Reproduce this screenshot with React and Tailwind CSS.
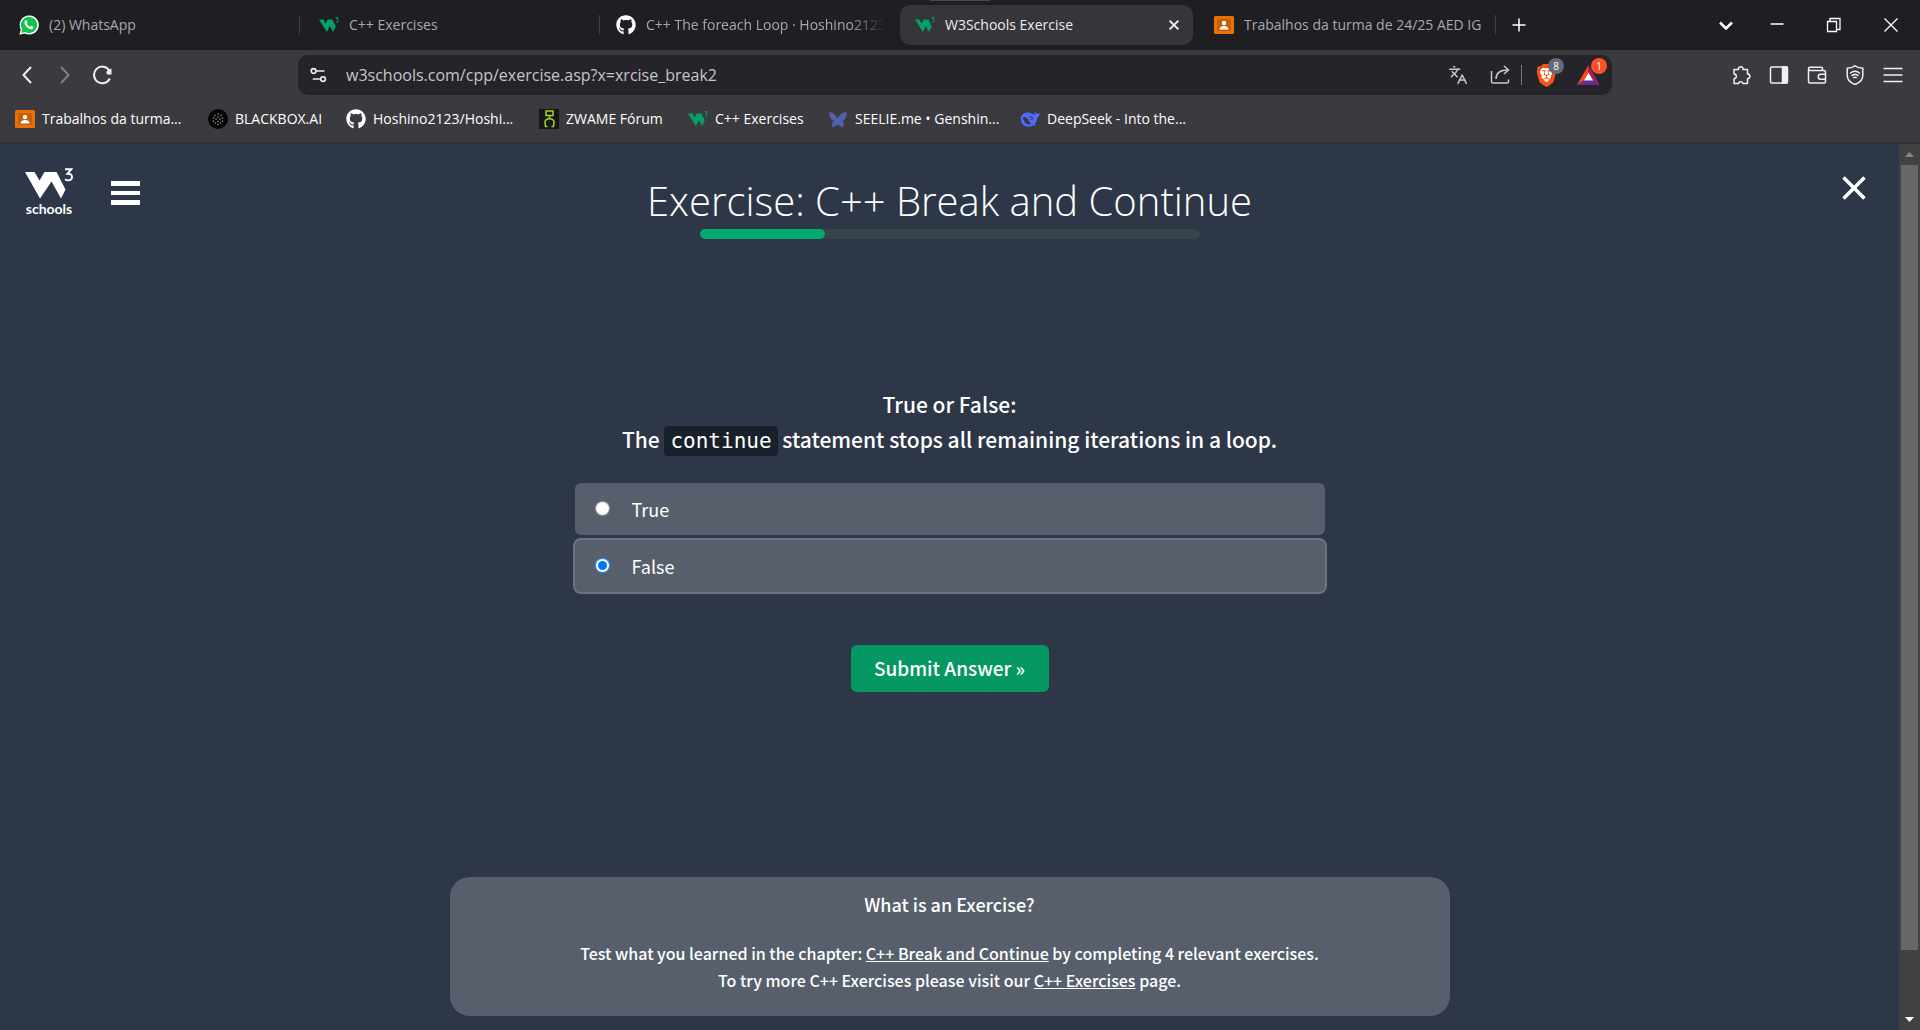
import React, { useState } from "react";
import { FaGithub } from "react-icons/fa";
import { SiBrave } from "react-icons/si";
import { Languages } from "lucide-react";

function W3Icon() {
  return (
    <svg viewBox="0 0 20 20" className="size-5 shrink-0" aria-hidden="true">
      <path d="M0 4.5h4.6l2 4 2-4h4.8l3.3 7-2.6 5.5-3.2-6-3 6Z" fill="#04a06a" />
      <path d="M16.6 2.6h2.6l-1.5 1.9c1.1 0 1.7.6 1.7 1.4 0 .9-1 1.6-2.6 1.2" fill="none" stroke="#04a06a" strokeWidth="1" />
    </svg>
  );
}

function WhatsAppIcon() {
  return (
    <svg viewBox="0 0 20 20" className="size-5 shrink-0" aria-hidden="true">
      <path d="M.4 19.8 1.8 14.6A9.6 9.6 0 1 1 5.6 18.4Z" fill="#fff" />
      <path d="m2.2 18 1-3.7A8.1 8.1 0 1 1 6 17Z" fill="#12c24c" />
      <path d="M7 5.2c.4 0 .6 0 .8.5l.7 1.6c.1.4-.7 1.1-.7 1.4.8 1.5 1.9 2.5 3.4 3.1.3.1.9-1 1.2-1l1.900.9c.5.3 0 1.8-.7 2.2-1.5.9-3.6 0-5.3-1.4C6.600 11 5.400 9.200 5.500 7.500c0-1 .7-2.300 1.500-2.300Z" fill="#fff" />
    </svg>
  );
}

function ClassroomIcon() {
  return (
    <svg viewBox="0 0 20 20" className="size-5 shrink-0" aria-hidden="true">
      <rect y="1" width="20" height="18" rx="1.5" fill="#e8710a" />
      <rect x="3" y="4" width="14" height="12" fill="#c65f08" />
      <circle cx="10" cy="8" r="2.2" fill="#fff" />
      <path d="M5.500 14.500c0-2.500 2.500-3.500 4.500-3.500s4.500 1 4.500 3.500Z" fill="#fff" />
    </svg>
  );
}

function BlackboxIcon() {
  const dots = [
    [10, 5], [7, 6.5], [13, 6.5], [10, 8], [5.5, 9], [14.5, 9], [8, 10], [12, 10],
    [5.5, 12], [14.5, 12], [10, 12.5], [7.5, 14], [12.5, 14], [10, 15.5],
  ];
  return (
    <svg viewBox="0 0 20 20" className="size-5 shrink-0" aria-hidden="true">
      <circle cx="10" cy="10" r="10" fill="#050505" />
      {dots.map(([x, y]) => (
        <circle key={`${x}-${y}`} cx={x} cy={y} r=".8" fill="#999" />
      ))}
    </svg>
  );
}

function ZwameIcon() {
  return (
    <svg viewBox="0 0 20 20" className="size-5 shrink-0" aria-hidden="true">
      <rect width="20" height="20" fill="#161616" />
      <g fill="none" stroke="#a4d420" strokeWidth="1.5">
        <path d="M7 2h7v4.500H7ZM10.500 6.500V9" />
        <path d="M8.500 17.500H6.500l-.5-4c0-5 9-5 9 0l-.5 4h-2" />
      </g>
    </svg>
  );
}

function SeelieIcon() {
  return (
    <svg viewBox="0 0 20 20" className="size-5 shrink-0" aria-hidden="true">
      <path d="M1 3c4 0 7 3 8.500 7C11 6 14 3 18.500 3c.5 4-1 8-4 9 2 2 2 4 .5 6-2 0-4-1-5.200-3.500C8.500 17 7 18 4.500 18 3.500 16 4 14 5.500 12 2.500 10.500 1 7 1 3Z" fill="#5560a8" />
      <path d="m9.700 10 2.200 3-2.200 4-2-4Z" fill="#3f62e0" />
    </svg>
  );
}

function DeepSeekIcon() {
  return (
    <svg viewBox="0 0 20 20" className="size-5 shrink-0" aria-hidden="true">
      <path d="M19.600 4.300c-.9.600-1.600.400-2.600.200-1-.3-1.500-1.200-2.400-1.800.1 1 .1 2 .9 2.900-.7.500-1.300.5-2 0-1-.8-2-1.400-3.500-1.600-.5-.1-1.300-.2-1.500-.8-2.400.5-4.200.4-6 2.300C.6 7.500.2 11 1.600 13.700c1.600 3 4.900 4.400 8 3.900 1.300-.2 2.300-.7 3.200-1.400.9.400 1.900.4 2.600 0 .5-.4 0-.8-.8-1.200 1.900-2.200 2.600-4.600 2.700-6.600 1.500-.4 2.500-1.800 2.300-4.100Z" fill="#4d6bfe" />
      <path d="M3 8.300c2-.7 3.600.3 4.800 2 1.200 1.700 1.900 3.500 3.600 4.600-3.400 1.300-5.700-.2-7.100-2.500C3.500 11.100 3 9.800 3 8.300Z" fill="#3b3b3f" />
      <path d="M9.600 8c1.600-.6 3 .8 3.400 2.300M10.500 10.200l.8.800" stroke="#3b3b3f" strokeWidth="1.2" fill="none" />
    </svg>
  );
}

function GithubIcon() {
  return <FaGithub className="size-5 shrink-0 text-white" aria-hidden="true" />;
}

const TABS = [
  { icon: WhatsAppIcon, label: "(2) WhatsApp" },
  { icon: W3Icon, label: "C++ Exercises" },
  { icon: GithubIcon, label: "C++ The foreach Loop · Hoshino2123" },
  { icon: W3Icon, label: "W3Schools Exercise", active: true },
  { icon: ClassroomIcon, label: "Trabalhos da turma de 24/25 AED IG" },
];

const BOOKMARKS = [
  { icon: ClassroomIcon, label: "Trabalhos da turma...", width: "w-[193px]" },
  { icon: BlackboxIcon, label: "BLACKBOX.AI", width: "w-[138px]" },
  { icon: GithubIcon, label: "Hoshino2123/Hoshi...", width: "w-[193px]" },
  { icon: ZwameIcon, label: "ZWAME Fórum", width: "w-[149px]" },
  { icon: W3Icon, label: "C++ Exercises", width: "w-[140px]" },
  { icon: SeelieIcon, label: "SEELIE.me • Genshin...", width: "w-[192px]" },
  { icon: DeepSeekIcon, label: "DeepSeek - Into the...", width: "w-[192px]" },
];

function Line({ children, className = "size-5", width = 1.5, label }) {
  return (
    <button type="button" aria-label={label} className="flex shrink-0 items-center justify-center">
      <svg viewBox="0 0 20 20" className={className} fill="none" stroke="currentColor" strokeWidth={width}>
        {children}
      </svg>
    </button>
  );
}

function TabStrip() {
  return (
    <div className="relative flex h-[50px] items-center bg-[#1f1e23] text-[#a9a9ad]">
      <div className="absolute top-0 left-1/2 h-px w-[60px] -translate-x-1/2 bg-[#4a4a4a]" />
      <div className="flex h-10 min-w-0 items-center" role="tablist">
        {TABS.map(({ icon: Icon, label, active }, i) => (
          <div
            key={i}
            className={
              active
                ? "flex h-10 w-[293px] min-w-0 items-center rounded-[10px] bg-[#36353a] pr-[11px] pl-[15px] text-[#ececee]"
                : i < 2
                  ? "flex h-5 w-[300px] min-w-0 items-center border-r border-[#3f3e44] pr-3 pl-[19px]"
                  : i === 2
                    ? "flex h-5 w-[300px] min-w-0 items-center pr-[15px] pl-[16px]"
                    : "flex h-5 w-[303px] min-w-0 items-center border-r border-[#3f3e44] pr-[10px] pl-[21px]"
            }
          >
            <button type="button" role="tab" aria-selected={!!active} className="flex min-w-0 flex-1 items-center gap-[10px]">
              <Icon />
              <span
                className={
                  i === 2
                    ? "overflow-hidden font-['Open_Sans'] text-sm whitespace-nowrap [mask-image:linear-gradient(90deg,#000_85%,transparent)]"
                    : "overflow-hidden font-['Open_Sans'] text-sm whitespace-nowrap"
                }
              >
                {label}
              </span>
            </button>
            {active && (
              <Line label="Close tab" className="size-4" width={2.5}>
                <path d="m4.500 4.500 11 11m0-11-11 11" />
              </Line>
            )}
          </div>
        ))}
      </div>
      <div className="flex flex-1 items-center justify-between pr-[19px] pl-[13px] text-white">
        <Line label="New tab">
          <path d="M3.500 10h13M10 3.500v13" />
        </Line>
        <div className="flex items-center gap-[31px]">
          <Line label="Search tabs" width={2.5}>
            <path d="m4 7.500 6 6 6-6" />
          </Line>
          <div className="flex items-center gap-[37px]">
            <Line label="Minimize">
              <path d="M3.500 9h13" />
            </Line>
            <Line label="Restore" width={1.3}>
              <path d="M3.500 6.500h9v10h-9ZM6 6.500v-3h10v11h-3.500" />
            </Line>
            <Line label="Close window" width={1.3}>
              <path d="m3.500 3.500 13 13m0-13-13 13" />
            </Line>
          </div>
        </div>
      </div>
    </div>
  );
}

function Toolbar() {
  return (
    <div className="flex h-[50px] items-center text-[#f0f0f2]">
      <div className="flex w-[298px] shrink-0 items-center gap-[18px] pl-[17px]">
        <Line label="Back" width={2}>
          <path d="m14 2-7.500 8 7.500 8" />
        </Line>
        <span className="text-[#808085]">
          <Line label="Forward" width={2}>
            <path d="m6 2 7.500 8L6 18" />
          </Line>
        </span>
        <Line label="Reload" width={2}>
          <path d="M16 5a8.300 8.300 0 1 0 .8 8.500" />
          <path d="M18.500 3.500v6h-4.500a3 3 0 0 1 1-4.500Z" fill="currentColor" stroke="none" />
        </Line>
      </div>
      <div className="flex h-10 w-[1314px] min-w-0 items-center rounded-[10px] bg-[#25242a] pr-3 pl-3">
        <Line label="Site settings" className="size-[18px]" width={1.8}>
          <circle cx="4" cy="5.500" r="2.600" />
          <path d="M7 5.500h9M3 14.500h8" />
          <circle cx="14.500" cy="14.500" r="2.600" />
        </Line>
        <input
          aria-label="Address"
          defaultValue="w3schools.com/cpp/exercise.asp?x=xrcise_break2"
          className="mr-4 ml-[18px] min-w-0 flex-1 bg-transparent font-['Open_Sans'] text-base text-[#c6c6ca] outline-none"
        />
        <div className="flex items-center text-[#c8c8cc]">
          <button type="button" aria-label="Translate">
            <Languages className="size-5" strokeWidth={1.8} />
          </button>
          <span className="ml-[22px] flex">
            <Line label="Share">
              <path d="M1.500 6v10.500c0 1 .5 1.500 1.500 1.500h14c1 0 1.500-.5 1.500-1.500v-2" />
              <path d="M6 14c0-5.500 3-9 12-9M14 1l4.500 4L14 9" />
            </Line>
          </span>
          <span className="mx-[11px] h-5 w-px bg-[#77767c]" />
          <button type="button" aria-label="Brave Shields" className="relative ml-[3px] flex h-6 w-5 items-center justify-center">
            <svg viewBox="0 0 20 22" className="absolute h-[22px] w-5" aria-hidden="true">
              <path d="M6 4h8l2.500 3-.5 4-2 5-4 4-4-4-2-5-.5-4Z" fill="#fff" />
            </svg>
            <SiBrave className="relative size-[23px] shrink-0 text-[#fb5112]" />
            <span className="absolute -top-[5px] left-3 flex size-4 items-center justify-center rounded-full bg-[#666a78] font-['Open_Sans'] text-[10px] text-white">8</span>
          </button>
          <button type="button" aria-label="Brave Rewards" className="relative ml-[21px] flex h-6 w-[23px] items-center">
            <svg viewBox="0 0 23 20" className="h-5 w-[23px]" aria-hidden="true">
              <path d="M11.500 0 0 20l7.500-4.500 4-8Z" fill="#ff4724" />
              <path d="M11.500 0 23 20l-7.500-4.500-4-8Z" fill="#9e1f63" />
              <path d="M0 20h23l-7.500-5h-8Z" fill="#662d91" />
              <path d="m11.500 7.500 4.500 8H7Z" fill="#fff" />
            </svg>
            <span className="absolute -top-[5px] left-[14px] flex size-4 items-center justify-center rounded-full bg-[#ff5028] font-['Open_Sans'] text-[10px] text-white">1</span>
          </button>
        </div>
      </div>
      <div className="flex flex-1 items-center justify-end gap-[18px] pr-[17px]">
        <Line label="Extensions">
          <path d="M3 4.500h4.500a2.300 2.300 0 1 1 4.500 0h4.500V9a2.300 2.300 0 0 1 0 4.700v4.800H12a2.300 2.300 0 0 0-4.500 0H3v-4.800A2.300 2.300 0 0 0 3 9Z" strokeLinejoin="round" />
        </Line>
        <Line label="Side panel">
          <rect x="1.500" y="2" width="17" height="16" rx="1.500" />
          <path d="M13.500 2h4.500v16h-4.500Z" fill="currentColor" />
        </Line>
        <Line label="Wallet">
          <path d="M15.500 5.500V3.500c0-.8-.5-1.300-1.300-1.300H3c-1 0-1.500.8-1.500 1.600S2 5.500 3 5.500h14c1 0 1.500.5 1.500 1.500v9.500c0 1-.5 1.500-1.500 1.500H3c-1 0-1.500-.5-1.500-1.500V3.800" />
          <path d="M18.500 9.300h-5c-3 0-3 5 0 5h5" />
        </Line>
        <Line label="VPN">
          <path d="M10 .8c2 1.700 4.500 2.500 7.800 2.500v7c0 4-3 7.500-7.800 9.200-4.800-1.700-7.800-5.200-7.800-9.200v-7C5.500 3.300 8 2.500 10 .8Z" />
          <path d="M5 8.500c3-2.600 7-2.600 10 0M6.500 10.800c2.200-1.800 4.800-1.800 7 0M8.200 13c1.200-.9 2.400-.9 3.600 0" />
        </Line>
        <Line label="Menu">
          <path d="M.5 3.500h19M.5 10h19M.5 16.500h19" />
        </Line>
      </div>
    </div>
  );
}

function Bookmarks() {
  return (
    <nav className="flex h-[42px] items-center pb-1 pl-[15px]" aria-label="Bookmarks">
      {BOOKMARKS.map(({ icon: Icon, label, width }, i) => (
        <div key={i} className={width}>
          <a href="#bookmark" className="flex w-fit items-center gap-[7px] font-['Open_Sans'] text-sm whitespace-nowrap text-white">
            <Icon />
            {label}
          </a>
        </div>
      ))}
    </nav>
  );
}

function Logo() {
  return (
    <a href="#home" aria-label="W3Schools" className="block w-12 text-white">
      <svg viewBox="0 0 48 31" className="h-[31px] w-12" aria-hidden="true">
        <path d="M0 4h9.500l5 8.500L19.500 4h12l9 17.500L36 30.500l-9.500-17L15 30.500Z" fill="currentColor" />
        <path d="M40 1.200h6.300l-3.800 4.500c3 0 4.500 1.200 4.500 3.300 0 3.200-4 4.300-7 2.300" fill="none" stroke="currentColor" strokeWidth="1.900" />
      </svg>
      <span className="block text-center font-['Lato'] text-sm leading-5 font-bold">schools</span>
    </a>
  );
}

function Option({ label, checked, onChange }) {
  return (
    <label
      className={
        checked
          ? "-mx-0.5 flex h-14 items-center gap-[22px] rounded-lg border-2 border-[#6b7280] bg-[#575f6c] pl-5"
          : "flex h-[52px] items-center gap-[22px] rounded-md bg-[#575f6c] pl-5"
      }
    >
      <input type="radio" name="answer" className="mb-0.5 size-[15px]" checked={checked} onChange={onChange} />
      <span className="text-[18px] leading-6">{label}</span>
    </label>
  );
}

function ScrollBar() {
  return (
    <div className="flex w-[21px] shrink-0 flex-col bg-[#424242]" aria-hidden="true">
      <div className="flex h-[21px] shrink-0 items-center justify-center">
        <svg viewBox="0 0 9 5" className="h-[5px] w-[9px]"><path d="M0 5h9L4.500 0Z" fill="#868686" /></svg>
      </div>
      <div className="flex-1 px-0.5">
        <div className="h-[93%] bg-[#686868]" />
      </div>
      <div className="flex h-[21px] shrink-0 items-center justify-center">
        <svg viewBox="0 0 9 5" className="h-[5px] w-[9px]"><path d="M0 0h9L4.500 5Z" fill="#fff" /></svg>
      </div>
    </div>
  );
}

export default function App() {
  const [answer, setAnswer] = useState("False");
  return (
    <div className="flex min-h-screen flex-col bg-[#2d3748] text-white">
      <header className="border-b-2 border-[#2f2e33] bg-[#3b3a3f]">
        <TabStrip />
        <Toolbar />
        <Bookmarks />
      </header>
      <div className="flex flex-1">
        <div className="flex min-w-0 flex-1 flex-col font-['Noto_Sans_CJK_SC',sans-serif]">
          <div className="grid grid-cols-[1fr_auto_1fr] items-start pt-6">
            <div className="flex items-start gap-[38px] pl-[25px]">
              <Logo />
              <button type="button" aria-label="Menu" className="mt-[13px] flex w-[29px] flex-col gap-[5px]">
                <span className="h-[5px] w-full bg-white" />
                <span className="h-[4px] w-full bg-white" />
                <span className="h-[5px] w-full bg-white" />
              </button>
            </div>
            <div className="flex flex-col items-center">
              <h1 className="pt-[5px] font-['Open_Sans'] text-[40px] leading-[56px] font-light">Exercise: C++ Break and Continue</h1>
              <div className="h-[10px] w-[500px] rounded-full bg-[#38444d]">
                <div className="h-full w-1/4 rounded-full bg-[#04aa6d]" />
              </div>
            </div>
            <button type="button" aria-label="Close exercise" className="mt-2 mr-[33px] justify-self-end">
              <svg viewBox="0 0 24 24" className="size-6" fill="none" stroke="currentColor" strokeWidth="3.5">
                <path d="m1.500 1.500 21 21m0-21-21 21" />
              </svg>
            </button>
          </div>

          <form className="mx-auto mt-[148px] flex w-full max-w-[750px] flex-col" onSubmit={(e) => e.preventDefault()}>
            <p className="text-center text-[21px] leading-[35px] font-medium whitespace-nowrap">
              True or False:
              <br />
              The{" "}
              <code className="rounded bg-[#18212b] px-[6px] py-[3px] font-['DejaVu_Sans_Mono',monospace] text-[21px] font-normal">continue</code>{" "}
              statement stops all remaining iterations in a loop.
            </p>
            <div className="mt-6 flex flex-col gap-[3px]">
              <Option label="True" checked={answer === "True"} onChange={() => setAnswer("True")} />
              <Option label="False" checked={answer === "False"} onChange={() => setAnswer("False")} />
            </div>
            <button type="submit" className="mt-[51px] h-[47px] w-[198px] self-center rounded-md bg-[#059862] text-[19px] font-medium">
              Submit Answer »
            </button>
          </form>

          <section className="mx-auto mt-auto mb-[14px] flex h-[139px] w-full max-w-[1000px] flex-col items-center rounded-[20px] bg-[#575f6c] pt-[15px] font-medium">
            <h2 className="text-lg leading-6">What is an Exercise?</h2>
            <p className="mt-6 text-center text-base leading-[27px]">
              Test what you learned in the chapter: <a href="#chapter" className="underline">C++ Break and Continue</a> by completing 4 relevant exercises.
              <br />
              To try more C++ Exercises please visit our <a href="#exercises" className="underline">C++ Exercises</a> page.
            </p>
          </section>
        </div>
        <ScrollBar />
      </div>
    </div>
  );
}
